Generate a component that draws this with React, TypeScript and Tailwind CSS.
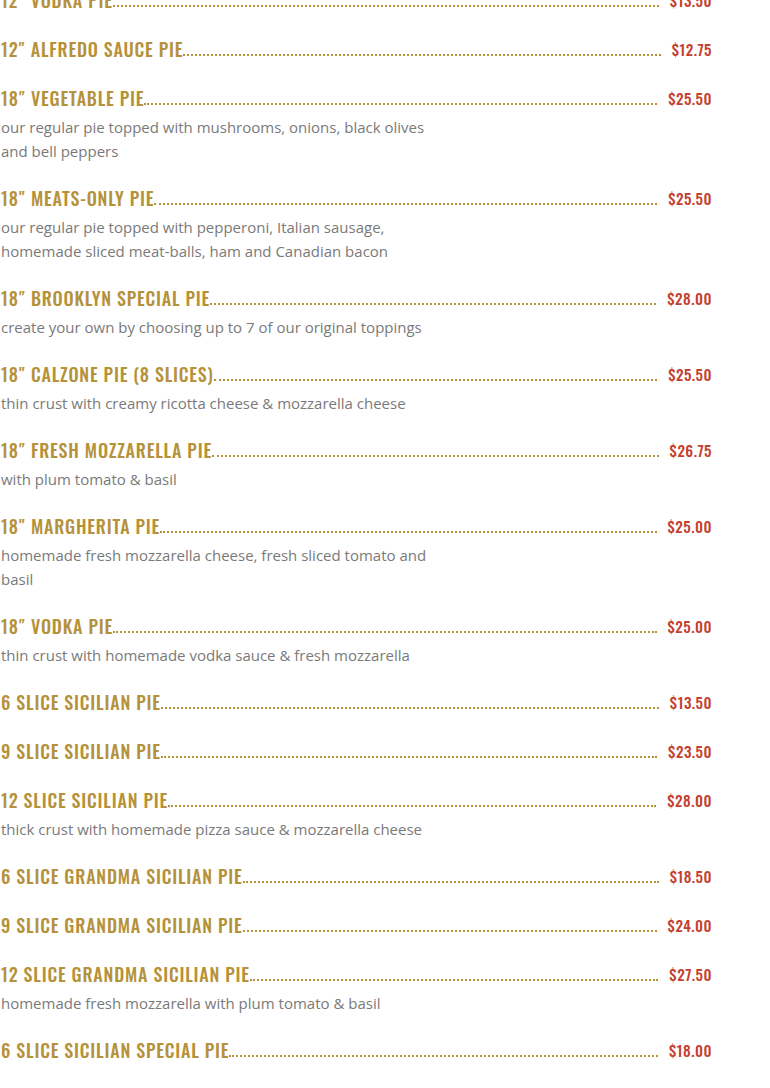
const items: { name: string; price: string; desc?: string }[] = [
  { name: "12″ Vodka Pie", price: "$13.50" },
  { name: "12″ Alfredo Sauce Pie", price: "$12.75" },
  {
    name: "18″ Vegetable Pie",
    price: "$25.50",
    desc: "our regular pie topped with mushrooms, onions, black olives and bell peppers",
  },
  {
    name: "18″ Meats-Only Pie",
    price: "$25.50",
    desc: "our regular pie topped with pepperoni, Italian sausage, homemade sliced meat-balls, ham and Canadian bacon",
  },
  {
    name: "18″ Brooklyn Special Pie",
    price: "$28.00",
    desc: "create your own by choosing up to 7 of our original toppings",
  },
  {
    name: "18″ Calzone Pie (8 Slices)",
    price: "$25.50",
    desc: "thin crust with creamy ricotta cheese & mozzarella cheese",
  },
  { name: "18″ Fresh Mozzarella Pie", price: "$26.75", desc: "with plum tomato & basil" },
  {
    name: "18″ Margherita Pie",
    price: "$25.00",
    desc: "homemade fresh mozzarella cheese, fresh sliced tomato and basil",
  },
  {
    name: "18″ Vodka Pie",
    price: "$25.00",
    desc: "thin crust with homemade vodka sauce & fresh mozzarella",
  },
  { name: "6 Slice Sicilian Pie", price: "$13.50" },
  { name: "9 Slice Sicilian Pie", price: "$23.50" },
  {
    name: "12 Slice Sicilian Pie",
    price: "$28.00",
    desc: "thick crust with homemade pizza sauce & mozzarella cheese",
  },
  { name: "6 Slice Grandma Sicilian Pie", price: "$18.50" },
  { name: "9 Slice Grandma Sicilian Pie", price: "$24.00" },
  {
    name: "12 Slice Grandma Sicilian Pie",
    price: "$27.50",
    desc: "homemade fresh mozzarella with plum tomato & basil",
  },
  { name: "6 Slice Sicilian Special Pie", price: "$18.00" },
];

function MenuItem({ name, price, desc }: { name: string; price: string; desc?: string }) {
  return (
    <div className="pb-[19px]">
      <div className="flex items-end h-[30px]">
        <h3 className="font-['Oswald','Roboto_Condensed',sans-serif] font-medium text-[18px] leading-[30px] tracking-[0.8px] uppercase text-[#b5923a] whitespace-nowrap">
          {name}
        </h3>
        <span className="flex-1 mb-[8px] border-b-2 border-dotted border-[#b5923a]" />
        <span className="pl-[11px] font-['Oswald','Roboto_Condensed',sans-serif] font-medium text-[15px] leading-[30px] tracking-[0.5px] text-[#c4412f]">
          {price}
        </span>
      </div>
      {desc && (
        <p className="pt-[2px] pb-[1px] max-w-[430px] font-['Open_Sans',sans-serif] text-[15px] leading-[24px] text-[#7a7a7a]">
          {desc}
        </p>
      )}
    </div>
  );
}

export default function App() {
  return (
    <div className="bg-white min-h-screen overflow-hidden">
      <div className="w-[712px] pl-[1px] -mt-[15px]">
        {items.map((item) => (
          <MenuItem key={item.name} {...item} />
        ))}
      </div>
    </div>
  );
}
